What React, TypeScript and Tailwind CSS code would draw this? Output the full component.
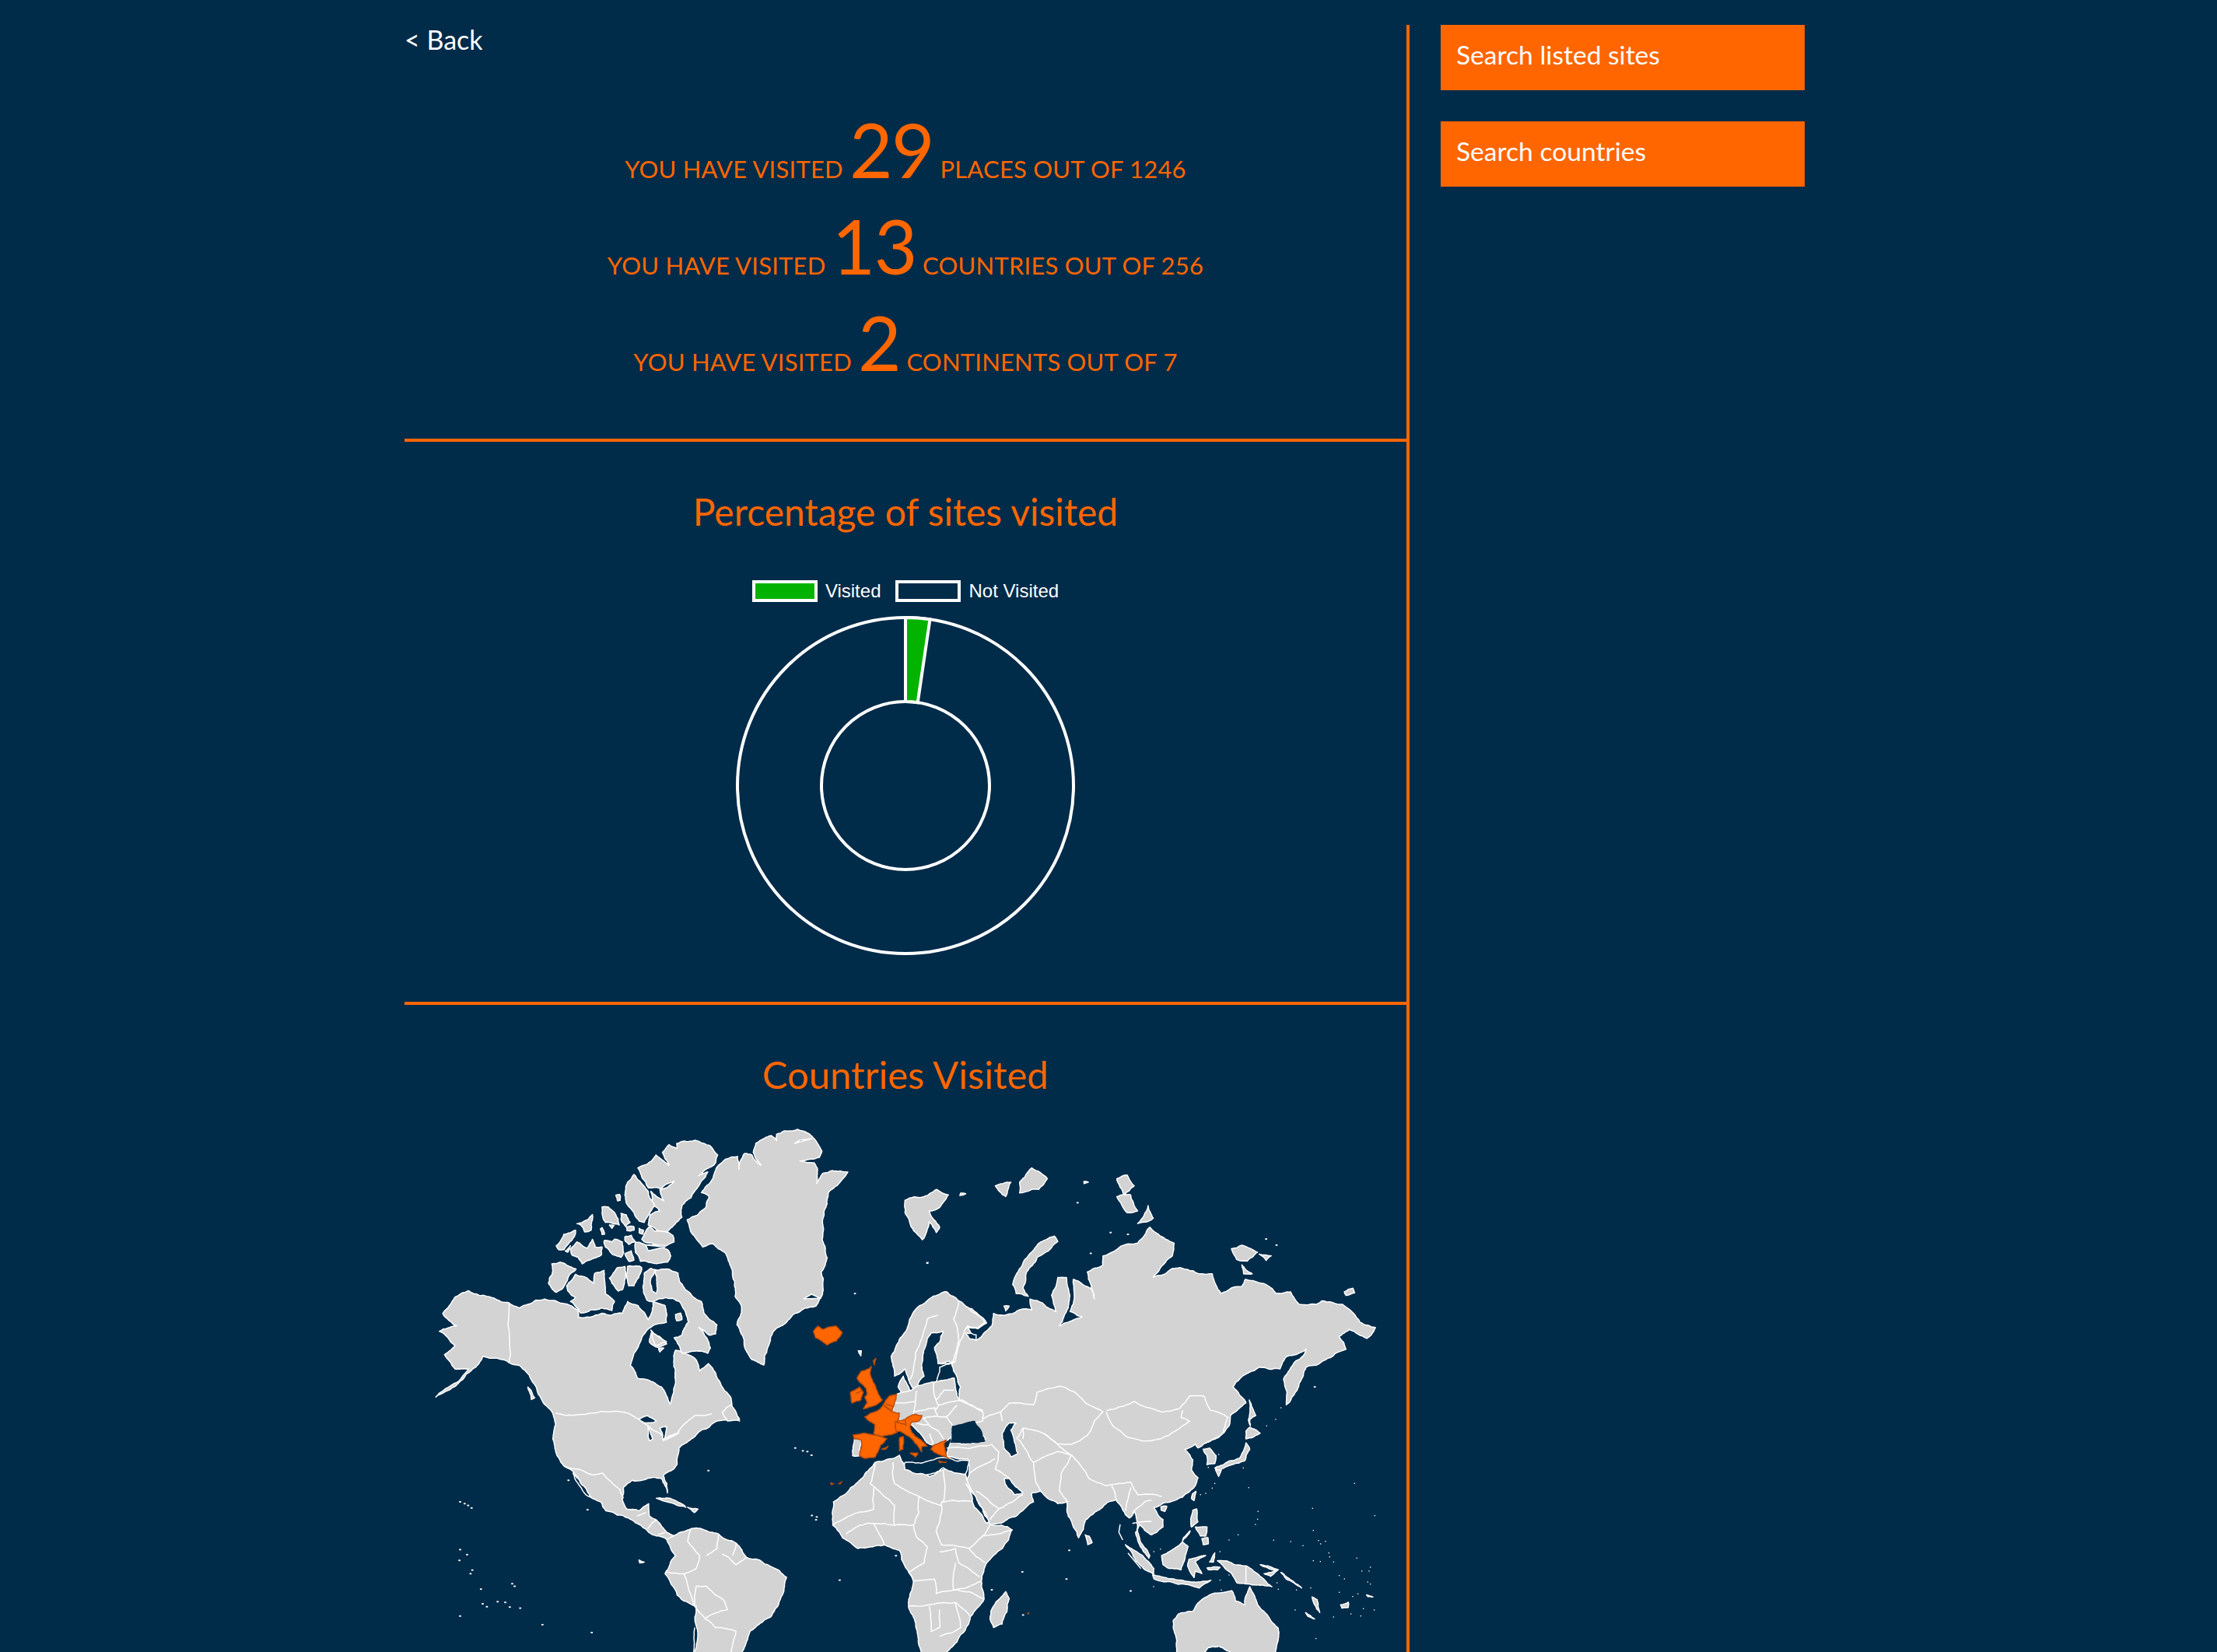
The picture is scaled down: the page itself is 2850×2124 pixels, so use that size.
function rough(d: string, amp = 0.09, minLen = 9): string {
  let seed = 7;
  for (let i = 0; i < d.length; i++) seed = (seed * 31 + d.charCodeAt(i)) % 2147483647;
  const rnd = () => {
    seed = (seed * 48271) % 2147483647;
    return seed / 2147483647 - 0.5;
  };
  const seg = (a: [number, number], b: [number, number], out: string[]) => {
    const dx = b[0] - a[0];
    const dy = b[1] - a[1];
    const len = Math.hypot(dx, dy);
    if (len < minLen) {
      out.push(`L${b[0].toFixed(1)} ${b[1].toFixed(1)}`);
      return;
    }
    const k = rnd() * amp * 2;
    const m: [number, number] = [(a[0] + b[0]) / 2 - dy * k, (a[1] + b[1]) / 2 + dx * k];
    seg(a, m, out);
    seg(m, b, out);
  };
  const out: string[] = [];
  let start: [number, number] = [0, 0];
  let cur: [number, number] = [0, 0];
  const re = /([MLZ])\s*(?:(-?\d+(?:\.\d+)?)\s+(-?\d+(?:\.\d+)?))?/g;
  let m: RegExpExecArray | null;
  while ((m = re.exec(d))) {
    if (m[1] === "M") {
      cur = start = [Number(m[2]), Number(m[3])];
      out.push(`M${cur[0]} ${cur[1]}`);
    } else if (m[1] === "L") {
      const p: [number, number] = [Number(m[2]), Number(m[3])];
      seg(cur, p, out);
      cur = p;
    } else {
      seg(cur, start, out);
      out.push("Z");
      cur = start;
    }
  }
  return out.join(" ");
}

const D_LAND = [
  "M815 90 L860 65 L875 60 L895 80 L895 55 L925 42 L975 36 L1010 48 L1050 85 L1070 120 L1060 145 L985 158 L1040 165 L1052 185 L1050 245 L1075 205 L1110 195 L1170 201 L1127 254 L1094 282 L1090 323 L1074 379 L1071 462 L1090 531 L1067 586 L1067 683 L1047 718 L960 750 L900 800 L880 820 L860 880 L846 945 L800 925 L770 860 L742 790 L760 720 L735 680 L725 600 L710 545 L695 510 L650 478 L610 490 L570 440 L550 385 L620 340 L635 295 L605 280 L650 225 L670 175 L700 150 L745 140 L750 190 L770 130 L800 135 L835 175 L805 125 Z",
  "M360 185 L410 160 L430 135 L480 175 L455 125 L480 95 L510 110 L510 90 L580 78 L640 100 L668 135 L660 165 L595 215 L630 200 L600 245 L565 300 L530 330 L530 375 L500 405 L470 435 L440 428 L400 405 L408 365 L445 350 L415 315 L410 275 L460 312 L445 270 L485 250 L500 235 L450 265 L400 262 L375 220 Z",
  "M345 210 L375 245 L400 275 L405 300 L425 330 L395 375 L385 395 L365 390 L335 345 L315 320 L310 290 L320 240 Z",
  "M275 290 L290 287 L292 310 L282 312 Z",
  "M222 335 L245 335 L275 365 L288 405 L265 400 L235 395 L222 360 Z",
  "M295 360 L315 365 L330 395 L312 410 L295 385 Z",
  "M250 405 L268 407 L260 418 Z",
  "M315 412 L345 412 L345 425 L318 427 Z",
  "M365 418 L382 425 L378 440 L365 435 Z",
  "M125 400 L145 395 L185 365 L185 385 L180 425 L155 432 L140 405 Z",
  "M222 415 L232 440 L222 442 L215 420 Z",
  "M45 485 L75 440 L120 425 L115 450 L90 480 L75 500 L55 500 Z",
  "M80 505 L100 485 L90 510 Z",
  "M100 500 L125 470 L165 495 L185 460 L195 490 L222 490 L220 520 L175 540 L145 555 L130 530 L105 520 Z",
  "M230 465 L260 470 L270 460 L300 470 L305 510 L295 530 L265 520 L235 490 Z",
  "M310 450 L335 445 L350 470 L325 480 L310 465 Z",
  "M310 515 L335 505 L345 540 L325 545 Z",
  "M405 410 L425 430 L465 430 L495 445 L500 470 L470 485 L385 470 L375 460 Z",
  "M350 470 L385 480 L430 480 L475 500 L487 525 L475 548 L410 550 L370 545 L350 510 Z",
  "M28 555 L60 548 L85 560 L122 575 L90 610 L70 650 L45 665 L15 630 L30 590 Z",
  "M85 640 L120 595 L165 610 L190 630 L195 590 L230 580 L232 620 L235 670 L270 700 L260 735 L220 725 L140 745 L100 700 L120 685 L90 660 Z",
  "M250 610 L280 570 L310 565 L312 610 L300 655 L285 660 L260 630 Z",
  "M320 565 L365 563 L375 570 L345 640 L325 640 Z",
  "M380 640 L385 590 L410 572 L430 578 L410 610 L415 660 L430 670 L425 580 L460 575 L480 575 L515 590 L520 620 L570 680 L605 700 L615 745 L665 790 L660 825 L635 830 L595 800 L640 880 L630 900 L530 900 L500 840 L530 830 L555 780 L545 745 L520 700 L470 685 L420 700 L395 695 Z",
  "M505 750 L525 745 L530 770 L510 775 Z",
  "M410 810 L470 855 L425 870 Z",
  "M440 880 L460 880 L445 895 Z",
];
const D_HOLES = [
  "M985 78 L1030 72 L965 90 Z",
  "M390 482 L465 490 L400 505 Z",
  "M1000 690 L1065 688 L1030 672 Z",
];
const A_LAND = [
  "M135 858 L200 820 L250 775 L270 745 L290 750 L345 762 L375 770 L410 810 L430 850 L470 900 L480 935 L472 975 L480 1010 L500 1045 L530 1065 L555 1110 L585 1140 L610 1150 L625 1175 L690 1195 L730 1220 L770 1245 L810 1258 L825 1245 L810 1240 L780 1210 L750 1190 L748 1155 L720 1175 L685 1170 L672 1140 L675 1110 L700 1090 L760 1082 L785 1085 L802 1125 L790 1075 L830 1045 L835 1000 L870 975 L900 950 L945 925 L1010 925 L985 895 L985 860 L955 820 L920 765 L895 785 L885 755 L825 728 L820 760 L825 810 L810 878 L785 830 L745 810 L715 805 L695 770 L706 736 L732 686 L754 664 L799 650 L795 603 L761 592 L747 643 L717 603 L687 592 L672 625 L612 625 L545 635 L545 617 L493 596 L448 585 L400 600 L375 610 L345 595 L260 575 L230 562 L190 580 L155 625 L195 660 L145 675 L190 715 L160 740 L190 780 L230 780 L180 825 Z",
  "M960 900 L985 880 L1010 920 L975 925 Z",
  "M770 1140 L810 1140 L855 1165 L820 1155 Z",
  "M860 1165 L890 1170 L880 1180 Z",
  "M800 1255 L830 1240 L870 1225 L950 1240 L1000 1265 L1030 1305 L1100 1330 L1145 1360 L1120 1440 L1100 1470 L1040 1510 L1010 1600 L870 1600 L885 1440 L830 1410 L795 1350 L825 1300 Z",
  "M720 1312 L735 1318 L722 1320 Z",
  "M400 830 L420 860 L410 865 Z",
  "M755 680 L780 690 L800 710 L775 720 L750 705 Z",
];
const A_LINES = [
  "M347 597 L347 762",
  "M480 903 L690 903 L720 920 L760 950 L800 975 L830 960 L880 910 L930 905",
  "M505 1050 L590 1075 L615 1070 L665 1115 L675 1140",
  "M715 1190 L740 1180 M745 1225 L770 1200 M775 1240 L795 1235",
  "M870 1225 L860 1260 L895 1300 L885 1335 L850 1350 L800 1345",
  "M950 1240 L945 1280 L915 1300",
  "M1000 1265 L990 1300 M1030 1305 L1000 1325 L960 1295",
  "M850 1350 L860 1380 L880 1440 L885 1385 L915 1385 L965 1425 L975 1450 L940 1460 L910 1475 L880 1440",
  "M880 1500 L870 1600 M1000 1510 L975 1600 M910 1475 L940 1500 L1000 1510",
];
const A_HOLES = [
  "M720 920 L745 910 L770 925 L740 930 Z",
  "M745 940 L760 975 L750 980 Z",
  "M780 945 L800 940 L790 980 Z",
  "M810 965 L835 958 L795 978 Z",
  "M530 1070 L582 1137 L575 1135 L535 1085 Z",
];
const A_DOTS: [number, number][] = [
  [1170, 1000], [1192, 1008], [1205, 1010], [1217, 1020], [1218, 1188], [1232, 1192], [1230, 1200],
  [205, 1150], [218, 1155], [238, 1167], [228, 1160], [920, 1063], [517, 1090], [572, 1172],
  [205, 1283], [225, 1297], [203, 1313], [240, 1340], [235, 1350], [265, 1393], [355, 1378], [362, 1385],
  [270, 1434], [282, 1442], [313, 1428], [335, 1430], [348, 1443], [378, 1446], [205, 1468], [442, 1492],
  [584, 1514], [1298, 1368], [1342, 570], [1355, 735], [1550, 485], [1460, 1300],
];
const B_LAND = [
  "M175 610 L190 600 L250 635 L265 652 L240 668 L210 665 L235 700 L250 690 L280 660 L285 625 L300 630 L360 615 L395 615 L390 585 L430 600 L465 620 L452 575 L470 525 L495 525 L500 610 L475 660 L500 650 L540 635 L505 620 L515 530 L570 560 L575 585 L555 510 L600 490 L600 465 L660 435 L700 430 L735 385 L760 405 L805 430 L800 465 L745 525 L800 500 L880 515 L915 515 L940 570 L1000 550 L1010 530 L1070 545 L1100 570 L1140 565 L1165 600 L1215 600 L1230 590 L1290 600 L1340 650 L1385 665 L1360 695 L1310 670 L1280 690 L1300 725 L1240 755 L1185 775 L1165 820 L1128 880 L1120 810 L1175 745 L1185 725 L1130 745 L1110 780 L1050 775 L1020 790 L975 830 L1012 874 L967 910 L963 939 L933 971 L896 986 L874 1000 L866 989 L836 1004 L859 1033 L855 1061 L874 1083 L866 1105 L829 1137 L777 1152 L747 1166 L773 1199 L773 1220 L739 1242 L706 1213 L694 1235 L706 1271 L732 1307 L735 1300 L709 1263 L698 1227 L691 1177 L676 1195 L657 1173 L638 1144 L612 1152 L550 1200 L530 1250 L500 1190 L495 1150 L470 1155 L420 1120 L395 1125 L400 1150 L350 1190 L275 1215 L240 1150 L205 1100 L215 1070 L210 1030 L150 1025 L155 1000 L165 970 L185 930 L250 920 L185 870 L190 830 L165 770 L185 700 Z",
  "M320 1400 L330 1420 L310 1490 L285 1500 L275 1470 L285 1440 Z",
  "M30 310 L85 300 L120 280 L155 295 L130 330 L100 340 L130 385 L120 400 L100 370 L80 420 L55 395 L30 345 Z",
  "M290 270 L335 260 L320 300 Z",
  "M360 260 L385 230 L395 220 L440 250 L415 280 L395 280 L360 290 Z",
  "M640 250 L670 240 L690 270 L660 295 Z",
  "M640 300 L680 295 L700 340 L670 345 Z",
  "M700 375 L730 325 L745 360 Z",
  "M340 545 L375 475 L415 430 L460 410 L470 425 L410 470 L380 510 L370 555 L385 578 L350 570 Z",
  "M970 445 L1000 435 L1045 455 L1015 480 L985 475 Z",
  "M1050 460 L1085 465 L1070 478 Z",
  "M1000 490 L1030 515 L1005 515 Z",
  "M1295 565 L1320 555 L1325 568 L1300 575 Z",
  "M315 605 L330 605 L320 618 Z",
  "M190 290 L205 292 L188 297 Z",
  "M545 258 L558 260 L546 264 Z",
  "M-56 1040 L14 1020 L30 1050 L100 1080 L140 1060 L205 1075 L212 1100 L240 1150 L275 1212 L338 1228 L310 1280 L265 1320 L250 1370 L258 1420 L218 1470 L180 1540 L130 1600 L85 1600 L65 1510 L40 1440 L54 1370 L20 1310 L14 1285 L-30 1270 L-106 1280 L-150 1250 L-178 1215 L-176 1150 L-126 1110 Z",
  "M0 800 L-10 745 L5 715 L50 630 L100 585 L150 565 L185 590 L240 630 L260 650 L240 665 L210 660 L190 700 L175 760 L130 765 L110 835 L60 840 L40 810 L30 780 Z",
  "M10 830 L25 800 L45 840 L20 850 Z",
];
const B_LINES = [
  "M610 895 L650 885 L690 870 L720 885 L770 900 L820 890 L850 855 L890 855 L910 895 L960 915 L945 960",
  "M610 900 L630 940 L670 970 L740 980 L790 965 L850 925 L825 915 L830 895",
  "M305 900 L330 875 L400 880 L410 845 L475 828 L520 845 L550 875 L600 900 L575 925 L555 965 L510 990 L470 990 L430 960 L370 945 L370 975",
  "M250 920 L305 900 L310 925",
  "M150 1000 L280 990 L300 1010 L290 1060 L330 1085",
  "M215 1070 L260 1045 L290 1030",
  "M355 975 L400 1040 L405 1090 L420 1120",
  "M400 1040 L470 1010 L510 1020 L480 1070 L475 1120 L500 1150",
  "M510 1020 L545 1060 L560 1085 L610 1105 L680 1095 L700 1130 L770 1135",
  "M640 1150 L625 1105 M665 1175 L680 1110 M685 1180 L720 1150 L740 1145 M685 1210 L740 1205",
  "M430 960 L470 990 L510 1020 M370 945 L350 975",
  "M896 986 L945 960",
  "M300 1170 L340 1150 L370 1130 M235 1120 L300 1170 L275 1200",
  "M140 1060 L140 1150 M135 1150 L235 1150",
  "M70 1135 L135 1160 M0 1100 L70 1135 L70 1180 L55 1215 M0 1215 L55 1215 L65 1250 L95 1275",
  "M135 1150 L130 1205 L120 1230 L135 1270 L215 1280 L260 1240 L275 1212",
  "M215 1280 L260 1320 M255 1245 L340 1228 M130 1290 L175 1280 L185 1320 L245 1360",
  "M95 1275 L85 1320 L40 1345 L54 1370 L115 1365 L120 1405 L175 1395 L250 1370",
  "M175 1320 L170 1395 L215 1400 L258 1420 M40 1440 L175 1430 L218 1470",
  "M100 1440 L105 1510 L130 1500 L130 1450 M175 1430 L190 1500 L130 1525",
  "M0 1100 L-5 1040 M-56 1040 L-70 1100 L0 1160 L0 1215",
  "M-178 1215 L-60 1170 L-60 1110 M-140 1240 L-100 1215 L-60 1210 L-30 1270 M-60 1210 L0 1215",
  "M125 630 L95 640 L60 735 L45 810 M185 590 L170 640 L185 700 L165 770",
];
const B_HOLES = [
  "M163 975 L175 945 L195 932 L230 950 L262 975 L230 985 L180 985 Z",
  "M310 960 L330 930 L350 930 L335 950 L355 1015 L335 1025 L315 1000 Z",
  "M315 1085 L330 1085 L370 1125 L345 1130 L325 1110 Z",
  "M205 1100 L230 1130 L272 1205 L265 1210 L230 1165 Z",
  "M105 680 L140 675 L130 705 L115 720 L125 765 L170 762 L130 775 L125 800 L105 835 L60 835 L85 800 L80 760 Z",
  "M30 1060 L90 1075 L140 1055 L205 1072 L215 1035 L150 1028 L30 1040 Z",
  "M205 680 L235 685 L235 700 L215 695 Z",
];
const B_DOTS: [number, number][] = [
  [95, 484], [527, 317], [622, 400], [672, 405], [565, 458], [1100, 435], [1070, 418], [368, 1345], [495, 1365],
  [503, 1285], [680, 1398], [1210, 830], [370, 1465], [280, 1395],
];
const E_LAND = [
  "M545 262 L600 235 L640 225 L665 165 L680 190 L660 235 L610 250 L560 275 Z",
  "M548 268 L570 270 L560 295 Z",
  "M665 120 L680 105 L720 128 L690 145 L665 150 Z",
  "M678 0 L690 30 L703 60 L680 75 L682 100 L675 80 L680 50 Z",
  "M500 190 L525 185 L550 215 L545 245 L515 250 L515 215 Z",
  "M460 360 L472 352 L465 388 L455 380 Z",
  "M338 410 L360 410 L352 430 L338 425 Z",
  "M45 520 L60 525 L72 550 L55 558 Z",
  "M460 425 L475 420 L480 470 L455 490 L452 460 Z",
  "M470 490 L515 490 L510 525 L490 525 Z",
  "M495 535 L518 530 L520 555 L500 558 Z",
  "M420 545 L450 505 L425 530 Z",
  "M340 600 L400 565 L420 548 L442 565 L430 610 L415 655 L370 650 L345 635 Z",
  "M445 615 L510 600 L470 625 L495 670 L470 660 L465 685 L440 640 Z",
  "M200 558 L250 590 L285 620 L310 650 L310 672 L275 655 L235 610 Z",
  "M305 675 L370 690 L440 700 L530 695 L485 725 L440 712 L370 700 L310 690 Z",
  "M525 625 L545 590 L540 625 Z",
  "M515 648 L565 645 L555 655 L520 655 Z",
  "M555 620 L590 620 L620 635 L665 640 L710 670 L750 710 L765 720 L720 715 L680 710 L630 705 L610 670 L590 655 Z",
  "M720 635 L750 640 L790 655 L760 680 L735 670 L780 658 Z",
  "M800 665 L880 725 L820 690 Z",
  "M920 760 L940 770 L950 820 L930 790 Z",
  "M895 820 L930 845 L905 835 Z",
  "M1030 790 L1060 780 L1060 800 L1035 803 Z",
  "M1130 752 L1155 760 L1135 758 Z",
  "M385 880 L385 850 L405 825 L460 815 L495 770 L530 750 L550 745 L610 735 L625 775 L660 790 L680 720 L710 790 L760 850 L790 880 L790 920 L780 1020 L400 1020 Z",
];
const E_LINES = ["M665 640 L665 705", "M210 590 L260 650", "M180 480 L175 510 L190 540"];
const E_HOLES = ["M490 985 L520 955 L560 950 L625 985 Z"];
const E_DOTS: [number, number][] = [
  [1084, 322], [676, 338], [712, 430], [710, 460], [702, 480], [922, 418], [1162, 446], [925, 503], [635, 520],
  [600, 540], [772, 541], [838, 546], [885, 562], [945, 542], [972, 545], [953, 555], [985, 590], [988, 605],
  [1003, 625], [1093, 610], [925, 620], [952, 623], [1145, 645], [1140, 660], [1112, 660], [1025, 677], [1045, 690],
  [1135, 702], [1145, 710], [1025, 742], [1097, 748], [1077, 758], [1118, 805], [1160, 810], [1070, 825],
  [1108, 833], [1003, 837], [855, 810], [935, 920], [220, 737], [309, 720], [565, 585], [335, 575], [310, 585],
  [915, 725], [785, 705], [790, 730], [860, 733], [600, 675], [565, 695], [570, 733], [545, 322], [535, 340],
  [510, 360], [490, 365], [800, 30], [780, 75], [745, 100], [655, 262], [520, 260], [560, 210],
];
const C_LAND = [
  "M440 345 L450 310 L458 278 L495 268 L515 262 L540 245 L610 230 L680 215 L700 300 L790 345 L790 380 L730 400 L670 440 L655 455 L640 465 L600 475 L575 465 L550 430 L520 400 L500 385 L460 375 L465 350 Z",
  "M295 450 L322 455 L315 515 L288 515 L290 480 Z",
  "M310 110 L322 110 L320 130 Z",
];
const C_LINES = [
  "M450 310 L530 305 L535 265",
  "M530 305 L525 340 L520 360",
  "M525 345 L605 330 L615 360",
  "M600 230 L610 300 L620 320 L710 300 L790 340",
  "M620 320 L605 340",
  "M560 370 L650 365 L675 400 L670 425",
  "M560 370 L585 400 L620 420 L640 450",
  "M585 430 L600 470",
  "M535 390 L580 395",
  "M650 365 L690 320",
  "M610 300 L640 262 L680 262",
];
const C_ORANGE = [
  "M137 35 L155 15 L175 28 L225 15 L248 40 L225 72 L190 88 L165 70 L145 60 Z",
  "M368 150 L378 140 L372 165 Z",
  "M320 190 L350 180 L360 170 L355 195 L365 225 L385 270 L403 300 L375 320 L330 335 L345 310 L335 290 L345 275 L340 255 L320 235 L305 215 Z",
  "M280 270 L315 250 L330 270 L320 300 L285 312 Z",
  "M405 320 L430 285 L458 278 L450 310 L440 345 Z",
  "M335 365 L360 350 L375 345 L395 335 L405 320 L440 345 L468 350 L465 375 L452 400 L460 425 L425 435 L400 440 L370 430 L375 395 Z",
  "M290 435 L330 428 L370 435 L420 450 L395 475 L375 520 L335 525 L315 515 L322 455 L295 450 Z",
  "M452 385 L490 375 L530 355 L555 360 L545 380 L515 385 L510 410 L530 440 L575 478 L555 480 L555 500 L545 485 L505 440 L470 420 L455 420 Z",
  "M510 505 L540 505 L530 520 Z",
  "M470 445 L483 440 L482 490 L468 495 Z",
  "M400 490 L425 478 L415 490 Z",
  "M600 475 L625 465 L650 455 L640 470 L650 520 L660 525 L620 510 L590 490 Z",
  "M620 535 L650 540 L625 542 Z",
];
const C_ORANGE_LINES = ["M415 315 L445 325", "M452 385 L495 395", "M300 275 L325 265", "M490 375 L495 400"];

const BG = "#002b49";

function Land({ d, fill = "#d3d3d3", stroke = "#ffffff" }: { d: string; fill?: string; stroke?: string }) {
  return <path d={d} fill={fill} stroke={stroke} strokeWidth={1.5} strokeLinejoin="round" vectorEffect="non-scaling-stroke" />;
}

function Dots({ list, w, h }: { list: [number, number][]; w: number; h: number }) {
  return (
    <>
      {list.map(([x, y]) => (
        <rect key={`${x}-${y}`} x={x - w / 2} y={y - h / 2} width={w} height={h} fill="#ffffff" />
      ))}
    </>
  );
}

function WorldMap() {
  return (
    <svg viewBox="520 1420 1288 704" className="h-[704px] w-[1288px] shrink-0">
      <g transform="translate(500 1400) scale(0.4464 0.4617)">
        {A_LAND.map((d) => <Land key={d} d={rough(d)} />)}
        {A_LINES.map((d) => <Land key={d} d={rough(d, 0.06)} fill="none" />)}
        {A_HOLES.map((d) => <Land key={d} d={rough(d)} fill={BG} />)}
        <Dots list={A_DOTS} w={6} h={4} />
        <path d="M1270 1095 L1285 1100 L1272 1104 Z M1292 1100 L1308 1090 L1300 1102 Z" fill="#b34a0c" />
      </g>
      <g transform="translate(700 1440) scale(0.3333)">
        {D_LAND.map((d) => <Land key={d} d={rough(d)} />)}
        {D_HOLES.map((d) => <Land key={d} d={d} fill={BG} />)}
      </g>
      <g transform="translate(1150 1400) scale(0.4464 0.4617)">
        {B_LAND.map((d) => <Land key={d} d={rough(d)} />)}
        {B_LINES.map((d) => <Land key={d} d={rough(d, 0.06)} fill="none" />)}
        {B_HOLES.map((d) => <Land key={d} d={rough(d)} fill={BG} />)}
        <Dots list={B_DOTS} w={6} h={4} />
        <rect x={382} y={1458} width={6} height={5} fill="#b34a0c" />
      </g>
      <g transform="translate(1380 1800) scale(0.3333)">
        {E_LAND.map((d) => <Land key={d} d={rough(d, 0.07, 7)} />)}
        {E_LINES.map((d) => <Land key={d} d={d} fill="none" />)}
        {E_HOLES.map((d) => <Land key={d} d={rough(d)} fill={BG} />)}
        <Dots list={E_DOTS} w={4} h={4} />
      </g>
      <g transform="translate(1000 1700) scale(0.3333)">
        {C_LAND.map((d) => <Land key={d} d={rough(d, 0.07, 8)} />)}
        {C_LINES.map((d) => <Land key={d} d={rough(d, 0.06, 8)} fill="none" />)}
        <path d={rough("M665 465 L672 400 L710 392 L760 380 L800 460 L740 468 Z", 0.07, 8)} fill={BG} />
        {C_ORANGE.map((d) => <Land key={d} d={rough(d, 0.07, 8)} fill="#ff6600" stroke="#b84d0a" />)}
        {C_ORANGE_LINES.map((d) => <Land key={d} d={d} fill="none" stroke="#b84d0a" />)}
      </g>
    </svg>
  );
}

function Donut() {
  const cx = 220;
  const cy = 220;
  const R = 216;
  const r = 108;
  const a = (29 / 1246) * 2 * Math.PI;
  const wedge = `M${cx} ${cy - R} A${R} ${R} 0 0 1 ${cx + R * Math.sin(a)} ${cy - R * Math.cos(a)} L${cx + r * Math.sin(a)} ${cy - r * Math.cos(a)} A${r} ${r} 0 0 0 ${cx} ${cy - r} Z`;
  return (
    <svg viewBox="0 0 440 440" className="h-[440px] w-[440px]">
      <circle cx={cx} cy={cy} r={R} fill="none" stroke="#ffffff" strokeWidth={4} />
      <circle cx={cx} cy={cy} r={r} fill="none" stroke="#ffffff" strokeWidth={4} />
      <path d={wedge} fill="#04b300" stroke="#ffffff" strokeWidth={4} />
    </svg>
  );
}

function Stat({ n, rest }: { n: string; rest: string }) {
  return (
    <p className="h-[124px] text-[31px] leading-[124px] font-normal tracking-[0.2px] whitespace-nowrap text-[#ff6600]">
      YOU HAVE VISITED <span className="text-[96px] tracking-[-1.5px]">{n}</span> {rest}
    </p>
  );
}

export default function App() {
  return (
    <div className="flex h-[2124px] gap-[40px] overflow-hidden bg-[#002b49] pt-[32px] pl-[520px] font-['Lato',sans-serif]">
      <div className="flex w-[1292px] shrink-0 flex-col items-center border-r-4 border-[#ff6600]">
        <a className="w-full text-[34px] leading-[38px] text-white">&lt; Back</a>
        <div className="mt-[60px] flex h-[434px] flex-col items-center">
          <Stat n="29" rest="PLACES OUT OF 1246" />
          <Stat n="13" rest="COUNTRIES OUT OF 256" />
          <Stat n="2" rest="CONTINENTS OUT OF 7" />
        </div>
        <div className="h-1 w-full shrink-0 bg-[#ff6600]" />
        <h2 className="mt-[60px] text-[48px] leading-[60px] text-[#ff6600]">Percentage of sites visited</h2>
        <div className="mt-[58px] flex h-[28px] items-center font-['Liberation_Sans',sans-serif] text-[24px] text-white">
          <span className="h-[28px] w-[84px] border-4 border-white bg-[#04b300]" />
          <span className="ml-[10px]">Visited</span>
          <span className="ml-[19px] h-[28px] w-[84px] border-4 border-white" />
          <span className="ml-[10px]">Not Visited</span>
        </div>
        <div className="mt-[16px]">
          <Donut />
        </div>
        <div className="mt-[58px] h-1 w-full shrink-0 bg-[#ff6600]" />
        <h2 className="mt-[59px] text-[49px] leading-[60px] text-[#ff6600]">Countries Visited</h2>
        <div className="mt-[9px]">
          <WorldMap />
        </div>
      </div>
      <div className="flex w-[468px] shrink-0 flex-col gap-[40px]">
        <div className="flex h-[84px] items-center bg-[#ff6600] px-[20px] pb-[8px] text-[33.6px] text-white">Search listed sites</div>
        <div className="flex h-[84px] items-center bg-[#ff6600] px-[20px] pb-[8px] text-[33.6px] text-white">Search countries</div>
      </div>
    </div>
  );
}
